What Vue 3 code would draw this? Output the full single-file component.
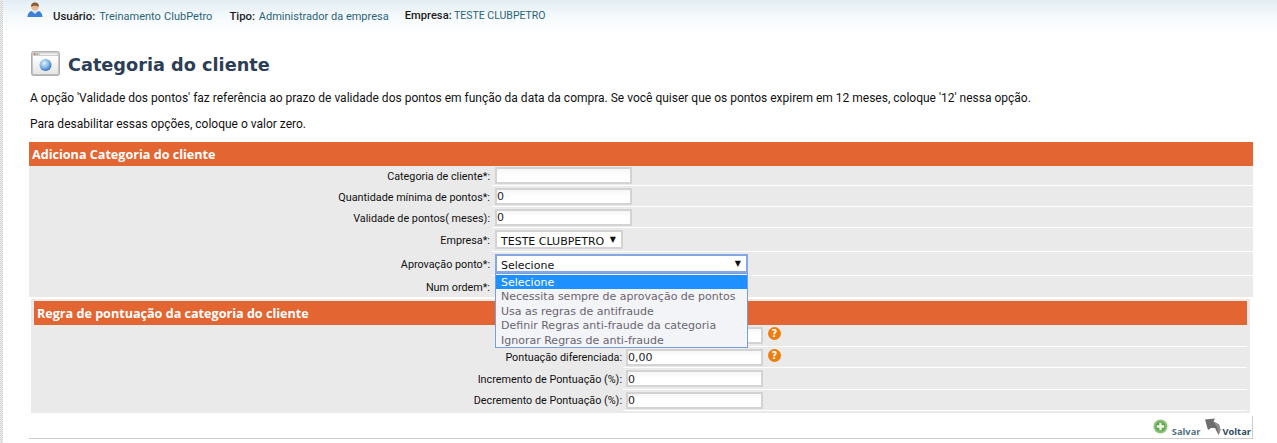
<script setup>
const info = [
  ['Usuário:', 'Treinamento ClubPetro'],
  ['Tipo:', 'Administrador da empresa'],
  ['Empresa:', 'TESTE CLUBPETRO']
]
const options = [
  'Selecione',
  'Necessita sempre de aprovação de pontos',
  'Usa as regras de antifraude',
  'Definir Regras anti-fraude da categoria',
  'Ignorar Regras de anti-fraude'
]
const scoreRows = [
  { label: '', value: '', help: true },
  { label: 'Pontuação diferenciada:', value: '0,00', help: true },
  { label: 'Incremento de Pontuação (%):', value: '0' },
  { label: 'Decremento de Pontuação (%):', value: '0' }
]
</script>

<template>
  <div class="page">
    <div class="strip"></div>
    <div class="content">
      <div class="topbar">
        <svg class="user" width="16" height="16" viewBox="0 0 16 16">
          <path d="M.5 15c0-3 2-6 4.500-6l3 2 3-2c2.500 0 4.500 3 4.500 6z" fill="#3f7fd6" />
          <path d="M5 9l3 3 3-3-1-1H6z" fill="#dfe8f5" />
          <circle cx="8" cy="5" r="3.6" fill="#eab892" />
          <path d="M4.200 5C3.800 1.500 6 .5 8 .5s4.200 1 3.800 4.500C10.500 3.300 6 3.300 4.200 5z" fill="#8a5a35" />
        </svg>
        <span v-for="item in info" :key="item[0]" class="pair"><b>{{ item[0] }}</b> {{ item[1] }}</span>
      </div>

      <div class="title">
        <svg class="win" width="29" height="25" viewBox="0 0 29 25">
          <defs>
            <linearGradient id="win" x1="0" y1="0" x2="0" y2="1">
              <stop offset="0" stop-color="#cfcfcf" />
              <stop offset="1" stop-color="#bdbdbd" />
            </linearGradient>
            <linearGradient id="pane" x1="0" y1="0" x2="0" y2="1">
              <stop offset="0" stop-color="#ffffff" />
              <stop offset="1" stop-color="#e4e4e4" />
            </linearGradient>
            <radialGradient id="globe" cx=".4" cy=".35" r=".7">
              <stop offset="0" stop-color="#e6f4ff" />
              <stop offset=".55" stop-color="#7db4e6" />
              <stop offset="1" stop-color="#2c67ad" />
            </radialGradient>
          </defs>
          <rect x=".5" y=".5" width="28" height="24" rx="2" fill="url(#win)" stroke="#b0b0b0" />
          <rect x="2" y="5" width="25" height="18" fill="url(#pane)" />
          <rect x="9" y="2.500" width="17" height="1.500" fill="#f2f2f2" />
          <circle cx="3.500" cy="3" r=".9" fill="#c66" />
          <circle cx="6" cy="3" r=".9" fill="#9b6" />
          <circle cx="14.500" cy="14" r="6" fill="url(#globe)" />
        </svg>
        <h1>Categoria do cliente</h1>
      </div>

      <p class="intro">A opção 'Validade dos pontos' faz referência ao prazo de validade dos pontos em função da data da compra. Se você quiser que os pontos expirem em 12 meses, coloque '12' nessa opção.</p>
      <p class="intro second">Para desabilitar essas opções, coloque o valor zero.</p>

      <section class="panel">
        <h2 class="bar">Adiciona Categoria do cliente</h2>
        <div class="row h20"><label>Categoria de cliente*:</label><div class="cell"><input class="inp" value="" /></div></div>
        <div class="row h21"><label>Quantidade mínima de pontos*:</label><div class="cell"><input class="inp" value="0" /></div></div>
        <div class="row h21"><label>Validade de pontos( meses):</label><div class="cell"><input class="inp" value="0" /></div></div>
        <div class="row h24"><label>Empresa*:</label><div class="cell"><div class="sel company">TESTE CLUBPETRO<span class="arrow">▼</span></div></div></div>
        <div class="row h24">
          <label>Aprovação ponto*:</label>
          <div class="cell">
            <div class="sel open">Selecione<span class="arrow">▼</span></div>
            <ul class="menu">
              <li v-for="(o, i) in options" :key="o" :class="{ active: i === 0 }">{{ o }}</li>
            </ul>
          </div>
        </div>
        <div class="row h21 last"><label>Num ordem*:</label><div class="cell"></div></div>
      </section>

      <section class="nested">
        <h2 class="bar">Regra de pontuação da categoria do cliente</h2>
        <div v-for="r in scoreRows" :key="r.value + r.label" class="row nrow">
          <label>{{ r.label }}</label>
          <div class="cell">
            <input class="inp" :value="r.value" />
            <span v-if="r.help" class="help">?</span>
          </div>
        </div>
      </section>

      <div class="actions">
        <svg width="15" height="15" viewBox="0 0 15 15" class="ic-plus">
          <circle cx="7.500" cy="7.500" r="7" fill="#8cc47a" />
          <circle cx="7.500" cy="7.500" r="5" fill="#5fa34c" />
          <path d="M6.300 3.800h2.400v2.500h2.500v2.400H8.700v2.500H6.300V8.700H3.800V6.300h2.500z" fill="#eef6ea" />
        </svg>
        <span class="act salvar">Salvar</span>
        <svg width="16" height="17" viewBox="0 0 16 17" class="ic-back">
          <path d="M0 1.500L10 .5 8.500 3.500l5.500 3 1.500 5.500-2 5-3.500-7-4 0-3 2z" fill="#6e6e6e" />
          <path d="M8.500 3.500l5.500 3 1.500 5.500-2 5-1-7z" fill="#8f8f8f" />
        </svg>
        <span class="act voltar">Voltar</span>
      </div>
    </div>
  </div>
</template>

<style>
html, body { background: #fff; overflow: hidden; }
</style>

<style scoped>
.page {
  display: flex;
  height: 443px;
  width: 1277px;
  overflow: hidden;
  font-family: Roboto, "Open Sans", sans-serif;
  font-size: 10.800px;
  color: #111;
  background: linear-gradient(#e2edf3 0, #f6fafc 18px, #fff 32px);
}
.strip {
  width: 3px;
  flex: none;
  background: repeating-conic-gradient(#cbcbcb 0 25%, #f6f6f6 0 50%) 0 0 / 2px 2px;
}
.content {
  width: 1224px;
  margin-left: 26px;
  position: relative;
}
.topbar {
  display: flex;
  align-items: center;
  height: 24px;
  padding-top: 7px;
  box-sizing: border-box;
  font-size: 11px;
}
.user { margin: -11px 10px 0 -2px; }
.pair { margin-right: 17px; color: #2b6478; white-space: nowrap; word-spacing: .5px; }
.pair b { color: #1c1c1c; font-weight: 500; font-size: 11.400px; margin-right: 1px; }
.pair:nth-of-type(2) { margin-right: 16px; word-spacing: 0; }
.pair:nth-of-type(3) { font-size: 10.500px; word-spacing: 0; }
.pair:nth-of-type(3) b { font-size: 11.200px; margin-right: 0; }
.title {
  display: flex;
  align-items: center;
  gap: 8px;
  margin: 25px 0 0 2px;
  height: 32px;
}
.win { margin-top: -4px; }
h1 {
  margin: 0;
  font: bold 17.700px "DejaVu Sans", sans-serif;
  color: #2c3e55;
}
.intro { margin: 9px 0 0 1px; line-height: 16px; height: 16px; white-space: nowrap; font-size: 12px; }
.second { margin-top: 10px; }
.panel { margin-top: 10px; background: #eaeaea; }
.bar {
  margin: 0;
  height: 24px;
  padding-left: 3px;
  background: #e36632;
  color: #fff;
  font: bold 12.600px/26px "Open Sans", sans-serif;
}
.row { display: grid; grid-template-columns: 463px 1fr; background: #eaeaea; }
.row label { text-align: right; align-self: center; padding: 1px 2px 0 0; }
.cell {
  position: relative;
  display: flex;
  align-items: center;
  gap: 5px;
  border-bottom: 1px solid #fff;
  padding-left: 3px;
}
.h20 { height: 20px; }
.h21 { height: 21px; }
.h24 { height: 24px; }
.last .cell { border-bottom: 0; }
.inp {
  box-sizing: border-box;
  width: 137px;
  height: 17px;
  border: 2px solid #d3d3d3;
  padding: 1px 0 0;
  font: 11px "DejaVu Sans", sans-serif;
  color: #222;
  background: linear-gradient(#f6f6f6, #fff 6px);
  outline: none;
}
.sel {
  box-sizing: border-box;
  position: relative;
  height: 19px;
  border: 2px solid #d3d3d3;
  padding-left: 4px;
  background: #fff;
  font: 11px/19px "DejaVu Sans", sans-serif;
}
.company { width: 128px; }
.open { width: 253px; border-color: #85a8e4; }
.arrow { position: absolute; right: 5px; top: -2px; font-size: 8px; }
.menu {
  position: absolute;
  z-index: 3;
  left: 3px;
  top: 21px;
  width: 253px;
  box-sizing: border-box;
  margin: 0;
  padding: 1px 0 0;
  list-style: none;
  background: #f2f4f7;
  border: 1px solid #7b9ed8;
  font: 11px/15.400px "DejaVu Sans", sans-serif;
  color: #6b6470;
}
.menu li { height: 14.400px; padding-left: 5px; white-space: nowrap; }
.menu .active { background: #1e90ff; color: #fff; }
.nested {
  margin: 2px 3px 0 2px;
  padding: 2px 3px;
  background: #eaeaea;
  height: 114px;
  box-sizing: border-box;
}
.nrow { grid-template-columns: 589px 1fr; height: 21.500px; }
.nrow label { padding-right: 1px; }
.nrow .cell { padding-top: 1px; }
.help {
  width: 13px;
  height: 13px;
  margin-top: -4px;
  border-radius: 50%;
  background: #ee7c0e;
  color: #fff;
  font: bold 10px/13px "DejaVu Sans", sans-serif;
  text-align: center;
}
.actions {
  display: flex;
  align-items: flex-end;
  justify-content: flex-end;
  box-sizing: border-box;
  height: 23px;
  margin-top: 3px;
  border-right: 1px solid #ccc;
  border-bottom: 1px solid #ccc;
  padding: 0 1px 1px 0;
}
.act { font: bold 9.300px/10px "Open Sans", sans-serif; }
.salvar { color: #51707f; margin: 0 5px 0 4px; }
.voltar { color: #2a4a5c; margin-left: 1px; }
.ic-plus { margin-bottom: 3px; }
.ic-back { margin-bottom: 2px; }
</style>
